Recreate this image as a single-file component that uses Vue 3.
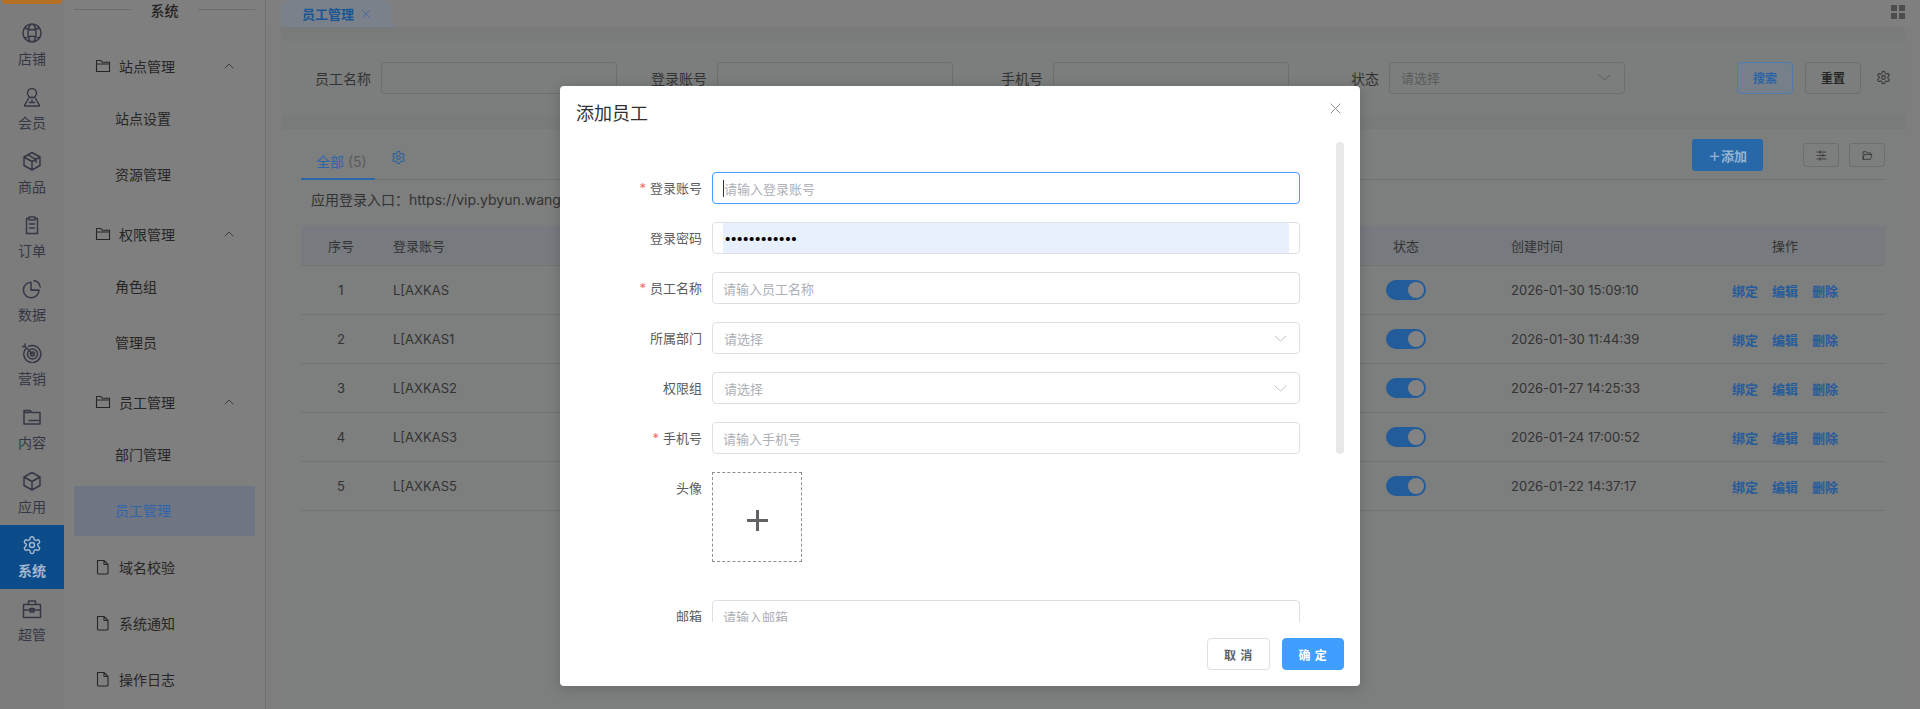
<script setup>
const icons = {
  globe: 'M1 10a9 9 0 1 0 18 0a9 9 0 1 0-18 0M6 10a4 9 0 1 0 8 0a4 9 0 1 0-8 0M2.6 5q7.4 3.4 14.8 0M2.6 15q7.4-3.4 14.8 0',
  user: 'M5.5 6a4.5 4.5 0 1 0 9 0a4.5 4.5 0 1 0-9 0M7 10.5 2.5 18.5a.5.5 0 0 0 .5.5h14a.5.5 0 0 0 .5-.5L13 10.5M7.5 15.5h5M10 13v2.5',
  box: 'M10 1.5 18 6v8.5L10 19 2 14.5V6zM2 6l8 4.5L18 6M10 10.5V19M6 3.8l8 4.5v3',
  clip: 'M6.5 3.5H4.5v15h11v-15h-2M7 2h6v3H7zM7.5 9h5M7.5 13h5',
  pie: 'M9 3.2a7.8 7.8 0 1 0 8 8h-8zM9 3.2V11h8M12 1.8a6.5 6.5 0 0 1 6.2 6.2',
  target: 'M3.5 6a8.5 8.5 0 1 0 3-2.5M5.5 11a5 5 0 1 0 10 0a5 5 0 1 0-10 0M8.5 11a2 2 0 1 0 4 0a2 2 0 1 0-4 0M10.5 11 3 3.5M3 3.5V1M3 3.5H.5',
  folder: 'M2 3.5h6l2 2h8v11.5H2zM2 5.5h6M7 13.5h11',
  cube: 'M10 1.5 18 6v8.5L10 19 2 14.5V6zM2 6l8 4.5L18 6M10 10.5V19',
  gear: 'M10.2 1.7h-.4a1.7 1.7 0 0 0-1.7 1.7v.1a1.7 1.7 0 0 1-.8 1.5l-.4.2a1.7 1.7 0 0 1-1.7 0l-.1-.1a1.7 1.7 0 0 0-2.3.6l-.2.3a1.7 1.7 0 0 0 .6 2.3l.1.1a1.7 1.7 0 0 1 .9 1.4v.4a1.7 1.7 0 0 1-.9 1.5l-.1.1a1.7 1.7 0 0 0-.6 2.3l.2.3a1.7 1.7 0 0 0 2.3.6l.1-.1a1.7 1.7 0 0 1 1.7 0l.4.2a1.7 1.7 0 0 1 .8 1.5v.1a1.7 1.7 0 0 0 1.7 1.7h.4a1.7 1.7 0 0 0 1.7-1.7v-.1a1.7 1.7 0 0 1 .8-1.5l.4-.2a1.7 1.7 0 0 1 1.7 0l.1.1a1.7 1.7 0 0 0 2.3-.6l.2-.3a1.7 1.7 0 0 0-.6-2.3l-.1-.1a1.7 1.7 0 0 1-.9-1.5v-.4a1.7 1.7 0 0 1 .9-1.4l.1-.1a1.7 1.7 0 0 0 .6-2.3l-.2-.3a1.7 1.7 0 0 0-2.3-.6l-.1.1a1.7 1.7 0 0 1-1.7 0l-.4-.2a1.7 1.7 0 0 1-.8-1.5v-.1a1.7 1.7 0 0 0-1.7-1.7zM7.5 10a2.5 2.5 0 1 0 5 0a2.5 2.5 0 1 0-5 0',
  tool: 'M1.5 5.5h17v13h-17zM6.5 5.5V2h7v3.5M1.5 11h17M8 9.5h4v3.5H8z',
  folderLine: 'M1.5 13.5V2.5h4.5l1.5 1.8H14.5v9.2zM1.5 6H14.5',
  file: 'M2.5 1.5h6.5l4 4v8.5a1 1 0 0 1-1 1H3.5a1 1 0 0 1-1-1zM9 1.5v4h4',
  sliders: 'M1.5 3h13M1.5 8h13M1.5 13h13M6 1v4M10 6v4M6 11v4',
  open: 'M1.5 13V2.5h4.5l1.5 1.8h5v2.2M1.5 13l2-6.5h11L12.5 13z',
  up: 'M1 6 5 2l4 4',
  down: 'M1 2l5.5 5L12 2',
  x: 'M1 1l10 10M11 1 1 11',
}
const rail = [
  { t: '店铺', i: 'globe' }, { t: '会员', i: 'user' }, { t: '商品', i: 'box' }, { t: '订单', i: 'clip' },
  { t: '数据', i: 'pie' }, { t: '营销', i: 'target' }, { t: '内容', i: 'folder' }, { t: '应用', i: 'cube' },
  { t: '系统', i: 'gear', active: true }, { t: '超管', i: 'tool' },
]
const menu = [
  { t: '站点管理', children: [{ t: '站点设置' }, { t: '资源管理' }] },
  { t: '权限管理', children: [{ t: '角色组' }, { t: '管理员' }] },
  { t: '员工管理', children: [{ t: '部门管理' }, { t: '员工管理', active: true }] },
  { t: '域名校验' }, { t: '系统通知' }, { t: '操作日志' },
]
const rows = [
  ['1', 'L[AXKAS', '2026-01-30 15:09:10'],
  ['2', 'L[AXKAS1', '2026-01-30 11:44:39'],
  ['3', 'L[AXKAS2', '2026-01-27 14:25:33'],
  ['4', 'L[AXKAS3', '2026-01-24 17:00:52'],
  ['5', 'L[AXKAS5', '2026-01-22 14:37:17'],
]
const fieldsTop = [
  { label: '登录账号', req: true, ph: '请输入登录账号', focus: true },
  { label: '登录密码', pwd: true },
  { label: '员工名称', req: true, ph: '请输入员工名称' },
  { label: '所属部门', ph: '请选择', select: true },
  { label: '权限组', ph: '请选择', select: true },
  { label: '手机号', req: true, ph: '请输入手机号' },
]
</script>

<template>
  <div class="page">
    <aside class="rail">
      <div class="logo-slot"><div class="logo"></div></div>
      <div v-for="r in rail" :key="r.t" class="rail-item" :class="{ on: r.active }">
        <svg class="rail-ic" viewBox="0 0 20 20"><path :d="icons[r.i]" /></svg>
        <span>{{ r.t }}</span>
      </div>
    </aside>

    <aside class="side">
      <div class="side-title"><i></i><b>系统</b><i></i></div>
      <template v-for="m in menu" :key="m.t">
        <div class="m-head" :class="{ group: m.children }">
          <svg v-if="m.children" class="m-ic" viewBox="0 0 16 16"><path :d="icons.folderLine" /></svg>
          <svg v-else class="m-ic" viewBox="0 0 16 16"><path :d="icons.file" /></svg>
          <span class="m-label">{{ m.t }}</span>
          <svg v-if="m.children" class="m-ch" viewBox="0 0 10 8"><path :d="icons.up" /></svg>
        </div>
        <div v-if="m.children" class="m-subs">
          <div v-for="c in m.children" :key="c.t" class="m-sub" :class="{ on: c.active }">{{ c.t }}</div>
        </div>
      </template>
    </aside>

    <main class="main">
      <div class="tabbar">
        <div class="tab">
          <span>员工管理</span>
          <svg class="tab-x" viewBox="0 0 12 12"><path :d="icons.x" /></svg>
        </div>
        <div class="grid-ic"><i></i><i></i><i></i><i></i></div>
      </div>

      <div class="content">
        <section class="search">
          <div class="s-field"><label>员工名称</label><div class="s-input"></div></div>
          <div class="s-field"><label>登录账号</label><div class="s-input"></div></div>
          <div class="s-field"><label>手机号</label><div class="s-input"></div></div>
          <div class="s-field">
            <label>状态</label>
            <div class="s-input s-select">
              <span>请选择</span>
              <svg viewBox="0 0 13 9"><path :d="icons.down" /></svg>
            </div>
          </div>
          <button class="btn btn-search">搜索</button>
          <button class="btn btn-reset">重置</button>
          <svg class="s-gear" viewBox="0 0 20 20"><path :d="icons.gear" /></svg>
        </section>

        <section class="card">
          <div class="t-top">
            <div class="t-tab">全部 <em>(5)</em></div>
            <svg class="t-gear" viewBox="0 0 20 20"><path :d="icons.gear" /></svg>
            <div class="spacer"></div>
            <button class="btn-add"><span class="plus">+</span>添加</button>
            <div class="ic-group">
              <button class="btn-ic"><svg viewBox="0 0 16 16"><path :d="icons.sliders" /></svg></button>
              <button class="btn-ic"><svg viewBox="0 0 16 16"><path :d="icons.open" /></svg></button>
            </div>
          </div>
          <div class="entry">应用登录入口：https://vip.ybyun.wang/</div>
          <div class="tr th">
            <div class="c-no">序号</div>
            <div class="c-acc">登录账号</div>
            <div class="c-st">状态</div>
            <div class="c-time">创建时间</div>
            <div class="c-op">操作</div>
          </div>
          <div v-for="r in rows" :key="r[0]" class="tr td">
            <div class="c-no">{{ r[0] }}</div>
            <div class="c-acc">{{ r[1] }}</div>
            <div class="c-st"><span class="switch"><i></i></span></div>
            <div class="c-time">{{ r[2] }}</div>
            <div class="c-op acts"><a>绑定</a><a>编辑</a><a>删除</a></div>
          </div>
        </section>
      </div>
    </main>

    <div class="overlay">
      <div class="modal">
        <header class="m-header">
          <span>添加员工</span>
          <svg class="m-close" viewBox="0 0 12 12"><path :d="icons.x" /></svg>
        </header>
        <div class="m-body">
          <div class="scrollbar"></div>
          <div v-for="f in fieldsTop" :key="f.label" class="f-row">
            <label class="f-label"><span v-if="f.req" class="req">*</span>{{ f.label }}</label>
            <div class="f-box" :class="{ focus: f.focus, pwd: f.pwd, sel: f.select }">
              <i v-if="f.focus" class="caret"></i>
              <div v-if="f.pwd" class="autofill">••••••••••••</div>
              <span v-else class="ph">{{ f.ph }}</span>
              <svg v-if="f.select" class="f-ch" viewBox="0 0 13 9"><path :d="icons.down" /></svg>
            </div>
          </div>
          <div class="f-row f-upload">
            <label class="f-label">头像</label>
            <div class="upload"><i class="ph-h"></i><i class="ph-v"></i></div>
          </div>
          <div class="f-row">
            <label class="f-label">邮箱</label>
            <div class="f-box"><span class="ph">请输入邮箱</span></div>
          </div>
        </div>
        <footer class="m-foot">
          <button class="f-btn cancel">取 消</button>
          <button class="f-btn ok">确 定</button>
        </footer>
      </div>
    </div>
  </div>
</template>

<style>
html, body { margin: 0; background: #7f7f7f; overflow: hidden; }
</style>

<style scoped>
* { box-sizing: border-box; }
svg { display: block; fill: none; stroke-linecap: round; stroke-linejoin: round; }
.page {
  display: flex; width: 1920px; height: 709px; overflow: hidden; position: relative;
  font-family: Inter, "Noto Sans CJK SC", sans-serif; color: #333;
}
button { font-family: inherit; cursor: pointer; padding: 0; }

.rail { width: 64px; flex: none; background: #7c7c7c; }
.logo-slot { height: 13px; padding: 0 2px; }
.logo { height: 4px; background: #b56f22; border-radius: 0 0 8px 8px; }
.rail-item { height: 64px; display: flex; flex-direction: column; align-items: center; padding-top: 10px; font-size: 14px; line-height: 20px; color: #343845; }
.rail-ic { width: 20px; height: 20px; stroke: #343845; stroke-width: 1.5; margin-bottom: 6px; }
.rail-item.on { background: #0c4c8b; color: #a3b6cb; font-weight: 700; }
.rail-item.on .rail-ic { stroke: #a3b6cb; }

.side { width: 202px; flex: none; padding: 0 10px; background: #7f7f7f; border-right: 1px solid #6f6f6f; }
.side-title { display: flex; align-items: center; justify-content: space-between; height: 20px; margin-bottom: 21px; font-size: 14px; color: #222; }
.side-title b { font-weight: 500; }
.side-title i { width: 57px; height: 1px; background: #6c6c6c; margin-top: -2px; }
.m-head { display: flex; align-items: center; height: 50px; margin-bottom: 6px; padding-left: 21px; font-size: 14px; color: #262626; }
.m-head.group { margin-top: 3px; margin-bottom: 3px; }
.m-ic { width: 16px; height: 16px; stroke: #262626; stroke-width: 1.1; margin-right: 8px; }
.m-label { flex: 1; }
.m-ch { width: 10px; height: 8px; stroke: #3d3d3d; stroke-width: 1; margin-right: 21px; }
.m-subs { display: flow-root; }
.m-sub { height: 50px; margin-bottom: 6px; padding-left: 41px; line-height: 50px; font-size: 14px; color: #262626; }
.m-sub.on { background: #6f7582; color: #2f66ab; }

.main { flex: 1; min-width: 0; display: flex; flex-direction: column; background: #7e7e7e; }
.tabbar { height: 27px; flex: none; display: flex; align-items: stretch; justify-content: space-between; padding: 0 15px; background: #7f7f7f; }
.tab { position: relative; width: 111px; display: flex; align-items: center; padding-left: 21px; gap: 8px; background: #7a818a; border-radius: 8px 8px 0 0; font-size: 13px; font-weight: 600; color: #1a5594; }
.tab::after { content: ""; position: absolute; right: -8px; bottom: 0; width: 8px; height: 8px; background: radial-gradient(circle at 100% 0, transparent 7.5px, #7a818a 8px); }
.tab-x { width: 8px; height: 8px; stroke: #2f6aa8; stroke-width: 1.1; }
.grid-ic { display: grid; grid-template-columns: 6px 6px; grid-auto-rows: 6px; gap: 2px; align-content: center; margin-top: -4px; }
.grid-ic i { background: #4d4d4d; }

.content { flex: 1; min-height: 0; display: flex; flex-direction: column; gap: 14px; margin: 0 15px; padding-top: 14px; background: #797b7a; }
.search { height: 74px; flex: none; display: flex; align-items: center; padding-bottom: 1px; background: #7c7e7d; }
.s-field { width: 336px; flex: none; display: flex; align-items: center; font-size: 14px; color: #333; }
.s-field label { width: 100px; padding-right: 10px; text-align: right; }
.s-input { width: 236px; height: 32px; border: 1px solid #6d6e70; border-radius: 4px; }
.s-select { display: flex; align-items: center; justify-content: space-between; padding: 0 13px 0 11px; font-size: 13px; color: #5a5b5d; }
.s-select svg { width: 13px; height: 9px; stroke: #5a5b5d; stroke-width: 1; }
.btn { height: 32px; width: 56px; border-radius: 4px; font-size: 12px; background: transparent; }
.btn-search { margin-left: 112px; background: #75808b; border: 1px solid #4c7cb2; color: #2a64a6; font-weight: 600; }
.btn-reset { margin-left: 12px; border: 1px solid #6d6e70; color: #262626; font-weight: 600; }
.s-gear { width: 15px; height: 15px; margin-left: 15px; stroke: #333; stroke-width: 1.4; }

.card { flex: 1; min-height: 0; padding: 0 20px; background: #7d7e7e; }
.t-top { height: 51px; display: flex; align-items: flex-end; border-bottom: 1px solid #707273; }
.t-tab { width: 74px; height: 38px; margin-bottom: -1px; padding-left: 15px; line-height: 40px; font-size: 14px; color: #2a68ab; border-bottom: 2px solid #2a68ab; white-space: nowrap; }
.t-tab em { font-style: normal; color: #5c5c5c; }
.t-gear { width: 15px; height: 15px; margin: 0 0 14px 16px; stroke: #2262a6; stroke-width: 1.4; }
.spacer { flex: 1; }
.btn-add { width: 71px; height: 32px; margin-bottom: 8px; display: flex; align-items: center; justify-content: center; background: #2769a8; border: 0; border-radius: 3px; color: #96b4d4; font-size: 13px; font-weight: 700; }
.plus { font-size: 20px; font-weight: 300; line-height: 20px; margin-top: -1px; }
.ic-group { display: flex; gap: 10px; margin-left: 40px; margin-bottom: 12px; }
.btn-ic { width: 36px; height: 24px; display: flex; align-items: center; justify-content: center; background: transparent; border: 1px solid #6d6e70; border-radius: 3px; }
.btn-ic svg { width: 11px; height: 11px; stroke: #333; stroke-width: 1.2; }

.entry { height: 46px; padding-left: 10px; line-height: 40px; font-size: 14px; color: #333; white-space: nowrap; }
.tr { display: grid; grid-template-columns: 80px 1000px 118px 186px 200px; align-items: center; font-size: 13px; color: #333; border-bottom: 1px solid #727374; }
.th { height: 40px; background: #777a7f; }
.td { height: 49px; }
.c-no { text-align: center; }
.c-acc, .c-st, .c-time { padding-left: 12px; }
.c-op { text-align: center; }
.switch { display: block; width: 40px; height: 20px; margin-left: -7px; padding: 2px; border-radius: 10px; background: #225c9a; }
.switch i { display: block; width: 16px; height: 16px; margin-left: 20px; border-radius: 50%; background: #838383; }
.acts { display: flex; justify-content: center; gap: 14px; color: #255c9c; font-weight: 600; }

.overlay { position: absolute; inset: 0; display: flex; justify-content: center; align-items: flex-start; padding-top: 86px; }
.modal { width: 800px; height: 600px; display: flex; flex-direction: column; background: #fff; border-radius: 4px; box-shadow: 0 2px 14px rgba(0,0,0,.18); }
.m-header { height: 56px; flex: none; display: flex; justify-content: space-between; padding: 16px 19px 0 16px; font-size: 18px; line-height: 24px; color: #303133; }
.m-close { width: 11px; height: 11px; margin-top: 1px; stroke: #7f8288; stroke-width: 1; }
.m-body { position: relative; flex: 1; min-height: 0; overflow: hidden; padding-top: 30px; }
.scrollbar { position: absolute; top: 0; right: 16px; width: 8px; height: 312px; border-radius: 4px; background: #e8e8e8; }
.f-row { display: flex; margin-bottom: 18px; }
.f-label { width: 142px; margin-right: 10px; text-align: right; font-size: 13px; line-height: 32px; color: #5a5c60; }
.req { color: #f56c6c; margin-right: 4px; }
.f-box { position: relative; width: 588px; height: 32px; display: flex; align-items: center; padding-left: 10px; border: 1px solid #dcdfe6; border-radius: 4px; }
.f-box.focus { border-color: #409eff; }
.f-box.pwd { padding-right: 10px; }
.ph { font-size: 13px; color: #aeb0b8; }
.focus .ph, .sel .ph { margin-left: 1px; }
.caret { position: absolute; left: 10px; top: 7px; width: 1px; height: 17px; background: #333; }
.autofill { flex: 1; height: 100%; padding-left: 1px; line-height: 30px; font-size: 13px; letter-spacing: -1.3px; color: #000; background: #e8f0fe; }
.f-ch { position: absolute; right: 12px; top: 11px; width: 13px; height: 9px; stroke: #c0c4cc; stroke-width: 1; }
.f-upload { margin-bottom: 38px; }
.upload { position: relative; width: 90px; height: 90px; border: 1px dashed #8f8f8f; }
.ph-h { position: absolute; left: 33.5px; top: 46px; width: 21px; height: 3px; background: #606266; }
.ph-v { position: absolute; left: 42.5px; top: 37px; width: 3px; height: 21px; background: #606266; }
.m-foot { height: 64px; flex: none; display: flex; justify-content: flex-end; align-items: flex-start; gap: 12px; padding: 16px 16px 0 0; }
.f-btn { height: 32px; border-radius: 4px; font-size: 12px; letter-spacing: .8px; font-weight: 700; }
.cancel { width: 63px; background: #fff; border: 1px solid #dcdfe6; color: #606266; }
.ok { width: 62px; background: #409eff; border: 1px solid #409eff; color: #fff; }
</style>
